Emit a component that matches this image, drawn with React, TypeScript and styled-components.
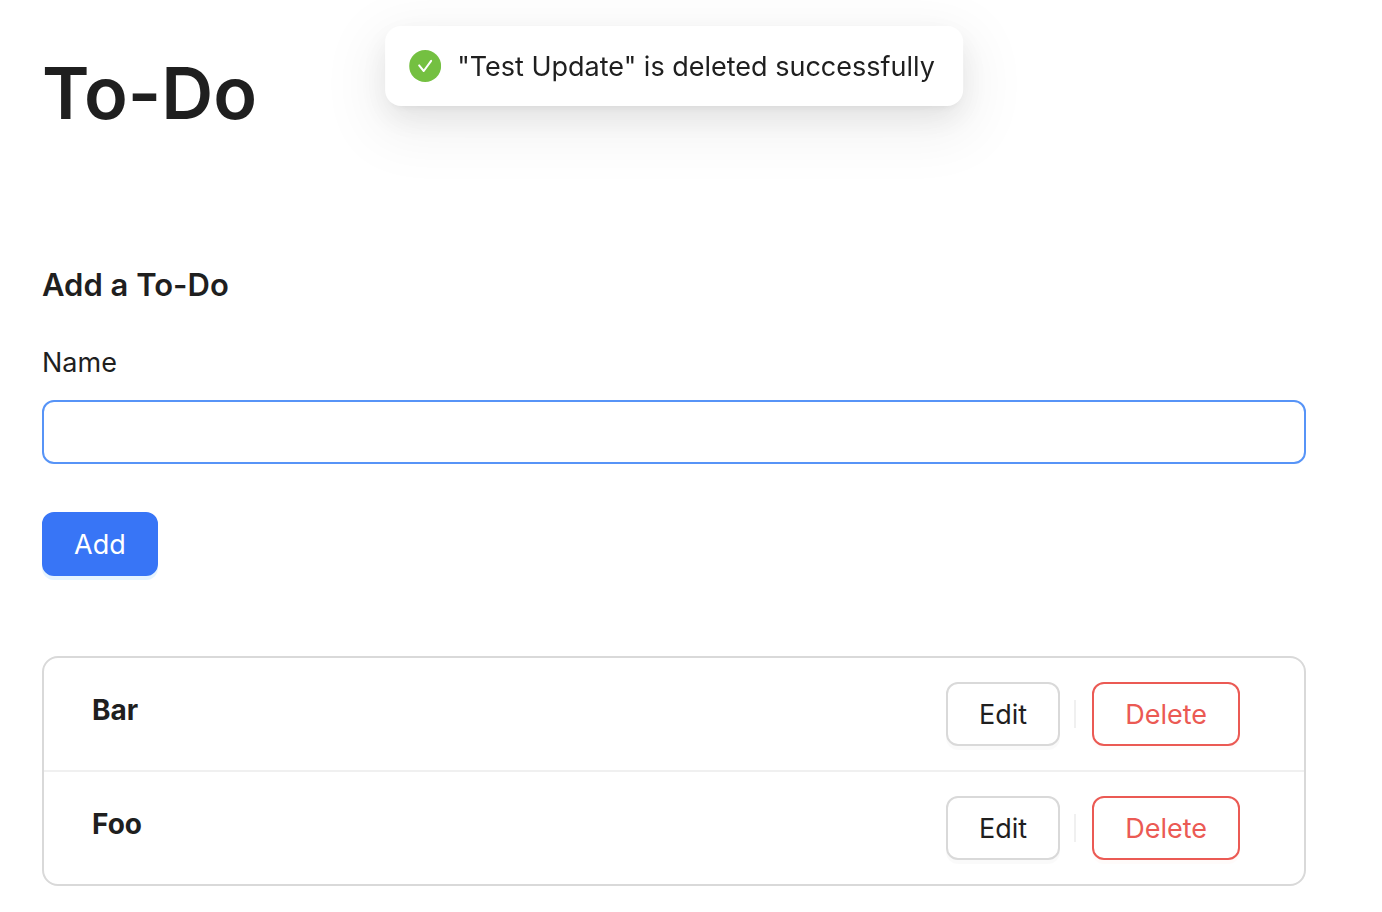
import React from "react";
import styled, { createGlobalStyle, css } from "styled-components";

const GlobalStyle = createGlobalStyle`
  *, *::before, *::after { box-sizing: border-box; }
  body {
    margin: 0;
    background: #fff;
    color: #1f1f1f;
    font-family: Inter, "Liberation Sans", sans-serif;
    font-size: 27px;
    line-height: 44px;
  }
`;

const Page = styled.main`
  padding: 48px 76px 26px 42px;
`;

const Title = styled.h1`
  margin: 0;
  font-size: 72px;
  line-height: 90px;
  font-weight: 600;
`;

const Section = styled.form`
  display: flex;
  flex-direction: column;
  align-items: flex-start;
  margin: 123px 0 80px;
`;

const Heading = styled.h2`
  margin: 0 0 32px;
  font-size: 31px;
  line-height: 48px;
  font-weight: 600;
`;

const Label = styled.label`
  margin-bottom: 15px;
`;

const TextInput = styled.input`
  width: 100%;
  height: 64px;
  margin-bottom: 48px;
  padding: 8px 22px;
  border: 2px solid #5794f7;
  border-radius: 12px;
  outline: none;
  background: #fff;
  color: inherit;
  font: inherit;
`;

const variants = {
  primary: css`
    padding: 2px 30px 0;
    background: #3875f6;
    border-color: #3875f6;
    color: #fff;
    box-shadow: 0 4px 0 rgba(5, 145, 255, 0.1);
  `,
  normal: css`
    padding: 2px 31px 0;
    background: #fff;
    border-color: #d9d9d9;
    color: #1f1f1f;
    box-shadow: 0 4px 0 rgba(0, 0, 0, 0.02);
  `,
  danger: css`
    padding: 2px 31px 0;
    background: #fff;
    border-color: #eb5a54;
    color: #eb5a54;
    box-shadow: 0 4px 0 rgba(255, 38, 5, 0.02);
  `,
};

const Button = styled.button<{ $variant: keyof typeof variants }>`
  height: 64px;
  border: 2px solid;
  border-radius: 12px;
  font: inherit;
  white-space: nowrap;
  cursor: pointer;
  ${({ $variant }) => variants[$variant]}
`;

const List = styled.ul`
  margin: 0;
  padding: 0;
  border: 2px solid #d9d9d9;
  border-radius: 16px;
  list-style: none;
`;

const Item = styled.li`
  display: flex;
  align-items: flex-start;
  justify-content: space-between;
  padding: 24px 64px 24px 48px;

  & + & {
    border-top: 2px solid #f0f0f0;
  }
`;

const ItemName = styled.h3`
  margin: 6px 0 0;
  font-size: 28px;
  line-height: 44px;
  font-weight: 700;
`;

const Actions = styled.div`
  display: flex;
  align-items: center;
`;

const Divider = styled.span`
  width: 2px;
  height: 28px;
  margin: 0 16px 0 14px;
  background: #f0f0f0;
`;

const Toast = styled.div`
  position: fixed;
  top: 26px;
  left: calc(50% - 17px);
  transform: translateX(-50%);
  display: flex;
  align-items: center;
  gap: 16px;
  height: 80px;
  padding: 0 28px 0 24px;
  border-radius: 16px;
  background: #fff;
  white-space: nowrap;
  box-shadow: 0 12px 32px rgba(0, 0, 0, 0.08), 0 6px 12px -8px rgba(0, 0, 0, 0.12),
    0 18px 56px 16px rgba(0, 0, 0, 0.05);
`;

const Message = styled.span`
  padding-top: 2px;
`;

const CheckIcon = () => (
  <svg width="32" height="32" viewBox="0 0 32 32" aria-hidden="true">
    <circle cx="16" cy="16" r="16" fill="#74c041" />
    <path
      d="M10 15.4l4.6 5.6L22 10.8"
      fill="none"
      stroke="#fff"
      strokeWidth="2"
      strokeLinecap="round"
      strokeLinejoin="round"
    />
  </svg>
);

const todos = ["Bar", "Foo"];

export default function App() {
  return (
    <>
      <GlobalStyle />
      <Toast role="status">
        <CheckIcon />
        <Message>"Test Update" is deleted successfully</Message>
      </Toast>
      <Page>
        <Title>To-Do</Title>
        <Section onSubmit={(e) => e.preventDefault()}>
          <Heading>Add a To-Do</Heading>
          <Label htmlFor="name">Name</Label>
          <TextInput id="name" type="text" />
          <Button type="submit" $variant="primary">Add</Button>
        </Section>
        <List>
          {todos.map((name) => (
            <Item key={name}>
              <ItemName>{name}</ItemName>
              <Actions>
                <Button type="button" $variant="normal">Edit</Button>
                <Divider />
                <Button type="button" $variant="danger">Delete</Button>
              </Actions>
            </Item>
          ))}
        </List>
      </Page>
    </>
  );
}
